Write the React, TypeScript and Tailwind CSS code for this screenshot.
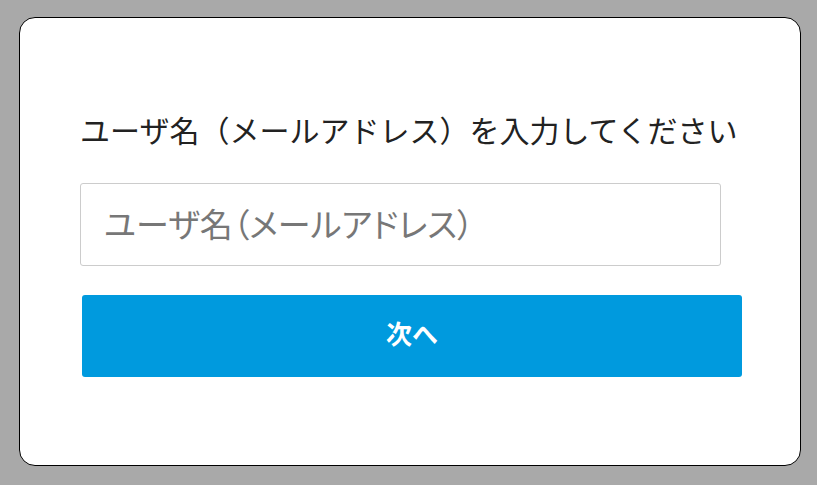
export default function App() {
  return (
    <div className="flex h-[485px] w-[817px] bg-[#a9a9a9] pt-[17px] pl-[19px] pr-[16px] pb-[19px] [font-family:'Noto_Sans_CJK_JP','Noto_Sans',sans-serif]">
      <div className="flex flex-1 flex-col rounded-[16px] border border-black bg-white">
        <div className="mt-[89px] ml-[60px] whitespace-nowrap text-[30px] leading-[44px] text-[#222]">
          ユーザ名（メールアドレス）を入力してください
        </div>
        <input
          type="text"
          placeholder="ユーザ名（メールアドレス）"
          className="mt-[32px] ml-[60px] h-[83px] w-[641px] rounded-[3px] border border-[#cccccc] px-[23px] pb-[4px] text-[33px] outline-none [font-feature-settings:'palt'] placeholder:text-[#777777]"
        />
        <button className="mt-[29px] ml-[62px] flex h-[82px] w-[660px] items-center justify-center rounded-[3px] bg-[#009ade] pb-[8px] text-[26px] font-bold text-white">
          次へ
        </button>
      </div>
    </div>
  );
}
